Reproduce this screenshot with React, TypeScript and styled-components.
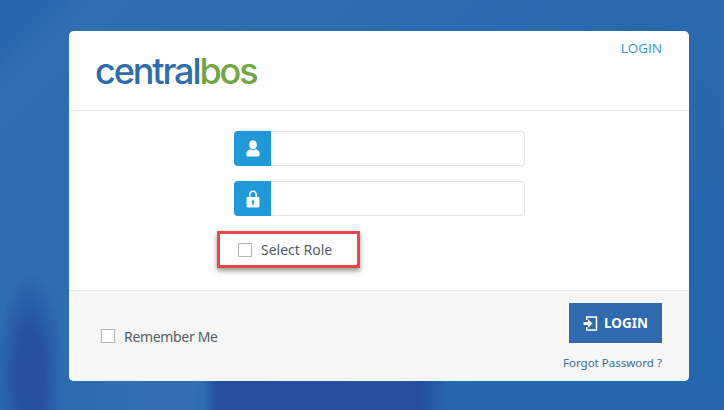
import React from "react";
import styled, { createGlobalStyle } from "styled-components";

const Global = createGlobalStyle`
  html, body { margin: 0; padding: 0; }
  body { font-family: "Noto Sans", "Open Sans", sans-serif; }
`;

const Page = styled.div`
  width: 724px;
  height: 410px;
  box-sizing: border-box;
  padding: 31px 35px 29px 69px;
  overflow: hidden;
  background:
    radial-gradient(ellipse 34px 105px at 30px 375px, #234fa0 0%, #2551a0 40%, rgba(36, 80, 160, 0) 100%) no-repeat,
    linear-gradient(90deg, rgba(35, 79, 160, 0) 205px, #234fa0 216px, #26519e 400px, #234fa0 420px, rgba(35, 79, 160, 0) 450px) left bottom / 100% 29px no-repeat,
    linear-gradient(90deg, rgba(51, 111, 176, 0) 75px, #336fb0 150px, #336fb0 190px, rgba(51, 111, 176, 0) 212px) left bottom / 100% 29px no-repeat,
    linear-gradient(135deg, rgba(48, 110, 178, 0) 0%, rgba(48, 110, 178, 0) 4%, #306eb2 8%, #2e6cb2 35%, rgba(46, 108, 178, 0) 62%),
    linear-gradient(215deg, #2a68ac 0%, #2367ae 40%, #2a69ad 100%);
`;

const Card = styled.div`
  width: 620px;
  height: 350px;
  border-radius: 5px;
  background: #fff;
  display: flex;
  flex-direction: column;
  overflow: hidden;
`;

const Header = styled.header`
  height: 79px;
  border-bottom: 1px solid #e6e6e6;
  display: flex;
  justify-content: space-between;
  align-items: flex-start;
  padding: 0 27px;
`;

const Logo = styled.div`
  margin-top: 17px;
  margin-left: -1px;
  font-family: "Inter", sans-serif;
  font-weight: 500;
  font-size: 36px;
  line-height: 46px;
  letter-spacing: -2.1px;
  color: #2f6cae;
`;

const LogoAccent = styled.span`
  color: #72a544;
`;

const TopLink = styled.a`
  margin-top: 8px;
  font-family: "Open Sans", sans-serif;
  font-size: 13.5px;
  line-height: 19px;
  color: #2f95d0;
`;

const Body = styled.main`
  flex: 1;
  box-sizing: border-box;
  padding: 20px 0 0 165px;
  display: flex;
  flex-direction: column;
  gap: 15px;
`;

const Field = styled.div`
  width: 291px;
  height: 35px;
  display: flex;
`;

const Addon = styled.div`
  width: 37px;
  height: 100%;
  background: #1f99d8;
  border-radius: 4px 0 0 4px;
  display: flex;
  align-items: center;
  justify-content: center;
`;

const Input = styled.input`
  flex: 1;
  min-width: 0;
  box-sizing: border-box;
  border: 1px solid #e4e4e4;
  border-left: none;
  border-radius: 0 4px 4px 0;
  background: #fff;
  outline: none;
`;

const RoleBox = styled.label`
  box-sizing: border-box;
  width: 143px;
  height: 37px;
  margin: 0 0 0 -17px;
  padding-left: 18px;
  border: 3px solid #e9474a;
  box-shadow: 0 3px 5px rgba(0, 0, 0, 0.4);
  display: flex;
  align-items: center;
  gap: 9px;
`;

const Check = styled.span`
  width: 12px;
  height: 12px;
  border: 1px solid #b5b5b5;
  background: #fff;
  flex: none;
`;

const CheckText = styled.span`
  font-family: "Noto Sans", sans-serif;
  font-size: 14px;
  line-height: 19px;
  color: #555b63;
`;

const RememberText = styled(CheckText)`
  letter-spacing: -0.33px;
`;

const Footer = styled.footer`
  height: 91px;
  box-sizing: border-box;
  border-top: 1px solid #e6e6e6;
  background: #f7f7f7;
  padding: 12px 27px 0 32px;
  display: flex;
  justify-content: space-between;
`;

const Remember = styled.label`
  margin-top: 23px;
  height: 20px;
  display: flex;
  align-items: center;
  gap: 9px;
`;

const Actions = styled.div`
  display: flex;
  flex-direction: column;
  align-items: flex-end;
`;

const LoginButton = styled.button`
  width: 93px;
  height: 40px;
  border: none;
  padding: 0;
  background: #3069ae;
  color: #fff;
  font-family: "Noto Sans", sans-serif;
  font-weight: 700;
  font-size: 13.5px;
  display: flex;
  align-items: center;
  justify-content: center;
  gap: 6px;
`;

const Forgot = styled.a`
  margin-top: 12px;
  font-family: "Noto Sans", sans-serif;
  font-size: 11.5px;
  line-height: 16px;
  letter-spacing: 0.02px;
  color: #3a6aa0;
  white-space: nowrap;
`;

const UserIcon = () => (
  <svg width="14" height="17" viewBox="0 0 14 17" fill="#fff">
    <ellipse cx="7" cy="4.8" rx="3.9" ry="4.6" />
    <path d="M4.6 9.2C2.2 9.9.4 11 .4 13.4v1.5c0 1.1.8 1.7 2 1.7h9.2c1.2 0 2-.6 2-1.7v-1.5c0-2.4-1.8-3.500-4.200-4.200-.7.6-1.500 1-2.400 1s-1.700-.4-2.400-1z" />
  </svg>
);

const LockIcon = () => (
  <svg width="14" height="18" viewBox="0 0 14 18">
    <path
      fill="#fff"
      fillRule="evenodd"
      d="M3 7V4.800C3 2.300 4.700.6 7 .6s4 1.700 4 4.200V7h1.300c.7 0 1.200.5 1.200 1.200v8c0 .7-.5 1.200-1.200 1.200H1.700C1 17.400.5 16.900.5 16.200v-8C.5 7.500 1 7 1.700 7H3zm1.500 0h5V4.800C9.500 3.200 8.500 2 7 2S4.500 3.200 4.500 4.800V7zM7 10.200c-.8 0-1.400.6-1.400 1.400 0 .5.300 1 .7 1.200V15h1.400v-2.200c.4-.2.700-.7.700-1.200 0-.8-.6-1.400-1.400-1.400z"
    />
  </svg>
);

const EnterIcon = () => (
  <svg width="15" height="15" viewBox="0 0 15 15" fill="none" stroke="#fff">
    <path strokeWidth="1.500" d="M3.800 4V1h9.700v13H3.800v-3" />
    <path fill="#fff" stroke="none" d="M.5 6h4.500V3.300l4.500 4.200-4.500 4.200V9H.5z" />
  </svg>
);

export default function App() {
  return (
    <>
      <Global />
      <Page>
        <Card>
          <Header>
            <Logo>
              central<LogoAccent>bos</LogoAccent>
            </Logo>
            <TopLink>LOGIN</TopLink>
          </Header>
          <Body>
            <Field>
              <Addon>
                <UserIcon />
              </Addon>
              <Input />
            </Field>
            <Field>
              <Addon>
                <LockIcon />
              </Addon>
              <Input type="password" />
            </Field>
            <RoleBox>
              <Check />
              <CheckText>Select Role</CheckText>
            </RoleBox>
          </Body>
          <Footer>
            <Remember>
              <Check />
              <RememberText>Remember Me</RememberText>
            </Remember>
            <Actions>
              <LoginButton>
                <EnterIcon />
                LOGIN
              </LoginButton>
              <Forgot>Forgot Password ?</Forgot>
            </Actions>
          </Footer>
        </Card>
      </Page>
    </>
  );
}
